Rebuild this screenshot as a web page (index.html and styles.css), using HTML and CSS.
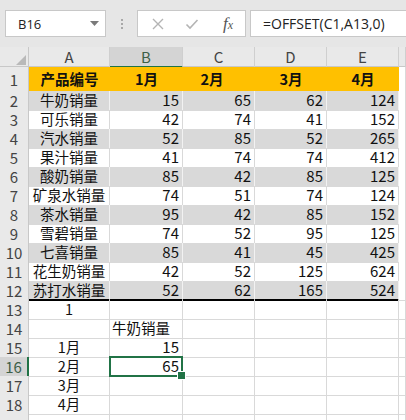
FILE: index.html
```html
<!DOCTYPE html>
<html>
<head>
<meta charset="utf-8">
<link rel="stylesheet" href="styles.css">
</head>
<body>
<div class="toolbar">
  <div class="namebox">
    <span class="nb-text">B16</span>
    <svg class="nb-arrow" width="9" height="5" viewBox="0 0 9 5"><path d="M0 0h9L4.5 5z" fill="#7a7a7a"/></svg>
  </div>
  <div class="dots"><i></i><i></i><i></i></div>
  <div class="fxbox">
    <svg class="ico" width="14" height="14" viewBox="0 0 14 14"><path d="M2 2L12 12M12 2L2 12" stroke="#b4b4b4" stroke-width="1.4" fill="none"/></svg>
    <svg class="ico" width="14" height="14" viewBox="0 0 14 14"><path d="M1.5 7.5L5 11L12.5 3" stroke="#b4b4b4" stroke-width="1.6" fill="none"/></svg>
    <span class="fx"><i>f</i><span class="fxx">x</span></span>
  </div>
  <div class="formula">=OFFSET(C1,A13,0)</div>
</div>

<div class="sheet">
  <div class="row colhead">
    <div class="corner"><svg width="10" height="10" viewBox="0 0 10 10"><path d="M10 0V10H0z" fill="#b9b9b9"/></svg></div>
    <div class="ch">A</div><div class="ch sel">B</div><div class="ch">C</div><div class="ch">D</div><div class="ch">E</div><div class="ch"></div>
  </div>

  <div class="row r1">
    <div class="rh">1</div>
    <div class="c y ctr b">产品编号</div>
    <div class="c y ctr b">1月</div>
    <div class="c y ctr b shift">2月</div>
    <div class="c y ctr b">3月</div>
    <div class="c y ctr b">4月</div>
    <div class="c"></div>
  </div>

  <div class="row g"><div class="rh">2</div><div class="c ctr">牛奶销量</div><div class="c n">15</div><div class="c n">65</div><div class="c n">62</div><div class="c n">124</div><div class="c x"></div></div>
  <div class="row"><div class="rh">3</div><div class="c ctr">可乐销量</div><div class="c n">42</div><div class="c n">74</div><div class="c n">41</div><div class="c n">152</div><div class="c x"></div></div>
  <div class="row g"><div class="rh">4</div><div class="c ctr">汽水销量</div><div class="c n">52</div><div class="c n">85</div><div class="c n">52</div><div class="c n">265</div><div class="c x"></div></div>
  <div class="row"><div class="rh">5</div><div class="c ctr">果汁销量</div><div class="c n">41</div><div class="c n">74</div><div class="c n">74</div><div class="c n">412</div><div class="c x"></div></div>
  <div class="row g"><div class="rh">6</div><div class="c ctr">酸奶销量</div><div class="c n">85</div><div class="c n">42</div><div class="c n">85</div><div class="c n">125</div><div class="c x"></div></div>
  <div class="row"><div class="rh">7</div><div class="c ctr">矿泉水销量</div><div class="c n">74</div><div class="c n">51</div><div class="c n">74</div><div class="c n">124</div><div class="c x"></div></div>
  <div class="row g"><div class="rh">8</div><div class="c ctr">茶水销量</div><div class="c n">95</div><div class="c n">42</div><div class="c n">85</div><div class="c n">152</div><div class="c x"></div></div>
  <div class="row"><div class="rh">9</div><div class="c ctr">雪碧销量</div><div class="c n">74</div><div class="c n">52</div><div class="c n">95</div><div class="c n">125</div><div class="c x"></div></div>
  <div class="row g"><div class="rh">10</div><div class="c ctr">七喜销量</div><div class="c n">85</div><div class="c n">41</div><div class="c n">45</div><div class="c n">425</div><div class="c x"></div></div>
  <div class="row"><div class="rh">11</div><div class="c ctr">花生奶销量</div><div class="c n">42</div><div class="c n">52</div><div class="c n">125</div><div class="c n">624</div><div class="c x"></div></div>
  <div class="row g last"><div class="rh">12</div><div class="c ctr">苏打水销量</div><div class="c n">52</div><div class="c n">62</div><div class="c n">165</div><div class="c n">524</div><div class="c x"></div></div>

  <div class="row plain"><div class="rh">13</div><div class="c ctr">1</div><div class="c"></div><div class="c"></div><div class="c"></div><div class="c"></div><div class="c"></div></div>
  <div class="row plain"><div class="rh">14</div><div class="c"></div><div class="c lft">牛奶销量</div><div class="c"></div><div class="c"></div><div class="c"></div><div class="c"></div></div>
  <div class="row plain"><div class="rh">15</div><div class="c ctr">1月</div><div class="c n">15</div><div class="c"></div><div class="c"></div><div class="c"></div><div class="c"></div></div>
  <div class="row plain"><div class="rh active">16</div><div class="c ctr">2月</div><div class="c n selected">65</div><div class="c"></div><div class="c"></div><div class="c"></div><div class="c"></div></div>
  <div class="row plain"><div class="rh">17</div><div class="c ctr">3月</div><div class="c"></div><div class="c"></div><div class="c"></div><div class="c"></div><div class="c"></div></div>
  <div class="row plain"><div class="rh">18</div><div class="c ctr">4月</div><div class="c"></div><div class="c"></div><div class="c"></div><div class="c"></div><div class="c"></div></div>
  <div class="row plain"><div class="rh"></div><div class="c"></div><div class="c"></div><div class="c"></div><div class="c"></div><div class="c"></div><div class="c"></div></div>
</div>
</body>
</html>
```

FILE: styles.css
```css
* { box-sizing: border-box; }
body {
  margin: 0;
  width: 406px;
  height: 420px;
  overflow: hidden;
  background: #fff;
  font-family: "Noto Sans CJK SC", sans-serif;
  color: #111;
}
.toolbar {
  height: 47px;
  background: #e6e6e6;
  display: flex;
  align-items: flex-start;
  padding-top: 10px;
}
.namebox {
  margin-left: 5px;
  width: 101px;
  height: 27px;
  background: #fff;
  border: 1px solid #c8c8c8;
  display: flex;
  align-items: center;
  justify-content: space-between;
  padding: 0 6px 0 12px;
  font-family: "Open Sans", sans-serif;
  font-size: 13px;
  color: #222;
}
.nb-arrow { margin-top: -1px; }
.dots {
  width: 31px;
  height: 27px;
  display: flex;
  flex-direction: column;
  align-items: center;
  justify-content: center;
  gap: 2px;
}
.dots i {
  display: block;
  width: 2px;
  height: 2px;
  background: #a8a8a8;
}
.fxbox {
  width: 109px;
  height: 27px;
  background: #fff;
  border: 1px solid #c8c8c8;
  display: flex;
  align-items: center;
  padding-left: 13px;
  gap: 20px;
}
.fx {
  margin-left: 4px;
  font-family: "Liberation Serif", serif;
  font-size: 17px;
  color: #555;
  line-height: 1;
}
.fx .fxx { font-size: 12px; font-style: italic; }
.formula {
  margin-left: 4px;
  flex: 1;
  height: 27px;
  background: #fff;
  border: 1px solid #c8c8c8;
  border-right: none;
  display: flex;
  align-items: center;
  padding-left: 12px;
  font-family: "Open Sans", sans-serif;
  font-size: 14px;
  color: #222;
}

.row {
  display: grid;
  grid-template-columns: 29px 81px 73px 72px 72px 72px 1fr;
  height: 19px;
  font-size: 14.5px;
  line-height: 18px;
}
.colhead {
  height: 20px;
  background: #e9e9e9;
  border-bottom: 1px solid #c8c8c8;
  font-size: 15px;
}
.corner {
  border-right: 1px solid #c8c8c8;
  display: flex;
  align-items: flex-end;
  justify-content: flex-end;
  padding: 0 2px 3px 0;
}
.ch {
  text-align: center;
  color: #444;
  border-right: 1px solid #cfcfcf;
  line-height: 19px;
}
.ch.sel {
  background: #d4d4d4;
  color: #3d5f48;
  border-bottom: 2px solid #217346;
}
.rh {
  background: #e9e9e9;
  border-right: 1px solid #c8c8c8;
  border-bottom: 1px solid #d6d6d6;
  text-align: center;
  color: #444;
  line-height: 19px;
  font-size: 15px;
}
.rh.active {
  background: #d4d4d4;
  color: #3d5f48;
  border-right: 2px solid #217346;
}
.c {
  border-right: 1px solid #d9d9d9;
  border-bottom: 1px solid #d9d9d9;
  white-space: nowrap;
  overflow: visible;
}
.n { font-size: 15px; }
.r1 { height: 24px; }
.r1 .rh { line-height: 25px; }
.r1 .c.y {
  background: #ffc000;
  border-right: none;
  border-bottom: 2px solid #000;
  line-height: 23px;
}
.b { font-weight: bold; }
.shift { padding-right: 14px; }
.ctr { text-align: center; }
.lft { text-align: left; padding-left: 2px; }
.n { text-align: right; padding-right: 3px; }
.g .c {
  background: #d9d9d9;
  border-bottom-color: #d9d9d9;
  border-right-color: #f2f2f2;
}
.g .c.x, .row .c.x { background: #fff; border-bottom-color: #d9d9d9; border-right-color: #d9d9d9; }
.last .c:not(.x) { border-bottom: 2px solid #000; }
.selected { position: relative; }
.selected::after {
  content: "";
  position: absolute;
  left: -1px;
  top: -1px;
  right: -1px;
  bottom: -1px;
  border: 2px solid #217346;
}
.selected::before {
  content: "";
  position: absolute;
  right: -4px;
  bottom: -4px;
  width: 7px;
  height: 7px;
  background: #217346;
  border: 1px solid #fff;
  z-index: 2;
}
```
